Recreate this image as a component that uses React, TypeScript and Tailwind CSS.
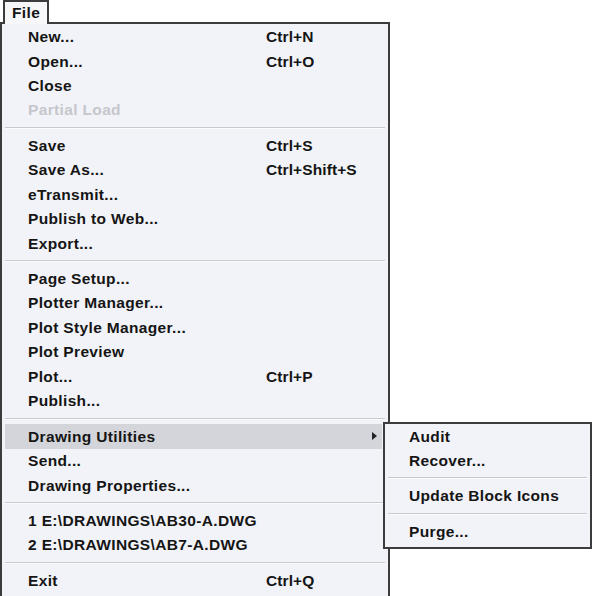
import React from 'react';

type Item =
  | { kind: 'item'; label: string; shortcut?: string; disabled?: boolean; active?: boolean; sub?: boolean }
  | { kind: 'sep' };

const fileMenu: Item[] = [
  { kind: 'item', label: 'New...', shortcut: 'Ctrl+N' },
  { kind: 'item', label: 'Open...', shortcut: 'Ctrl+O' },
  { kind: 'item', label: 'Close' },
  { kind: 'item', label: 'Partial Load', disabled: true },
  { kind: 'sep' },
  { kind: 'item', label: 'Save', shortcut: 'Ctrl+S' },
  { kind: 'item', label: 'Save As...', shortcut: 'Ctrl+Shift+S' },
  { kind: 'item', label: 'eTransmit...' },
  { kind: 'item', label: 'Publish to Web...' },
  { kind: 'item', label: 'Export...' },
  { kind: 'sep' },
  { kind: 'item', label: 'Page Setup...' },
  { kind: 'item', label: 'Plotter Manager...' },
  { kind: 'item', label: 'Plot Style Manager...' },
  { kind: 'item', label: 'Plot Preview' },
  { kind: 'item', label: 'Plot...', shortcut: 'Ctrl+P' },
  { kind: 'item', label: 'Publish...' },
  { kind: 'sep' },
  { kind: 'item', label: 'Drawing Utilities', active: true, sub: true },
  { kind: 'item', label: 'Send...' },
  { kind: 'item', label: 'Drawing Properties...' },
  { kind: 'sep' },
  { kind: 'item', label: '1 E:\\DRAWINGS\\AB30-A.DWG' },
  { kind: 'item', label: '2 E:\\DRAWINGS\\AB7-A.DWG' },
  { kind: 'sep' },
  { kind: 'item', label: 'Exit', shortcut: 'Ctrl+Q' },
];

const utilMenu: Item[] = [
  { kind: 'item', label: 'Audit' },
  { kind: 'item', label: 'Recover...' },
  { kind: 'sep' },
  { kind: 'item', label: 'Update Block Icons' },
  { kind: 'sep' },
  { kind: 'item', label: 'Purge...' },
];

const Separator = () => (
  <div className="h-[11px] flex items-center px-[3px]">
    <div className="w-full border-t border-b border-t-[#c9cacf] border-b-[#fbfbfd]" />
  </div>
);

const App = () => {
  return (
    <div className="relative w-[592px] h-[596px] overflow-hidden bg-white text-[15.5px] font-bold tracking-[0.35px] text-[#151515] font-['Liberation_Sans',Arial,sans-serif]">
      {/* menu bar tab */}
      <div className="relative z-10 ml-[3px] w-[46px] h-[24px] border-2 border-b-0 border-[#3c3c3c] bg-[#f7f7fa] pl-[7px] leading-[22px]">
        File
      </div>

      {/* file menu */}
      <div className="-mt-[2px] w-[390px] h-[620px] border-2 border-[#3c3c3c] bg-[#f2f3f8] pt-[0.5px]">
        {fileMenu.map((item, i) =>
          item.kind === 'sep' ? (
            <Separator key={i} />
          ) : (
            <div key={i} className="h-[24.45px] px-[3px]">
              <div
                className={
                  'relative h-full flex items-center pl-[23px] ' +
                  (item.active ? 'bg-[#d4d5da] mr-[3px]' : '') +
                  (item.disabled ? ' text-[#c6c7cc]' : '')
                }
              >
                <span className="w-[238px] whitespace-nowrap">{item.label}</span>
                {item.shortcut && (
                  <span className="whitespace-nowrap tracking-[0.1px]">{item.shortcut}</span>
                )}
                {item.sub && (
                  <svg className="absolute right-[5px] top-[8px]" width="5" height="8" viewBox="0 0 5 8">
                    <polygon points="0,0 5,4 0,8" fill="#222" />
                  </svg>
                )}
              </div>
            </div>
          )
        )}
      </div>

      {/* drawing utilities submenu */}
      <div className="absolute left-[383px] top-[422px] w-[209px] border-2 border-[#3c3c3c] bg-[#f2f3f8] pb-[3px]">
        {utilMenu.map((item, i) =>
          item.kind === 'sep' ? (
            <Separator key={i} />
          ) : (
            <div key={i} className="h-[24.4px] flex items-center pl-[24px] whitespace-nowrap">
              {item.label}
            </div>
          )
        )}
      </div>
    </div>
  );
};

export default App;
